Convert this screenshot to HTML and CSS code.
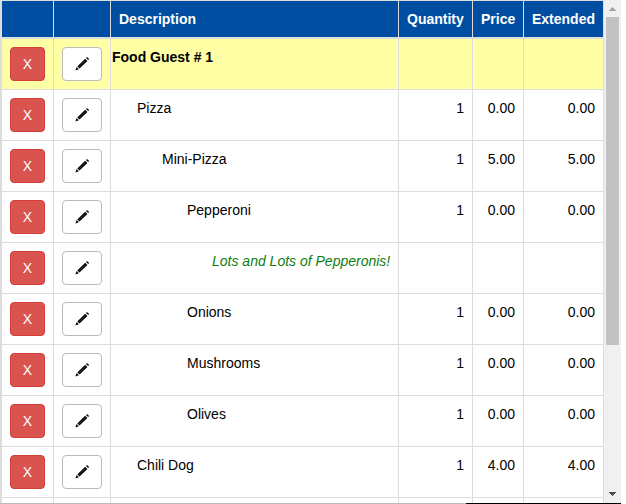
FILE: index.html
```html
<!DOCTYPE html>
<html lang="en">
<head>
    <meta charset="UTF-8">
    <meta name="viewport" content="width=device-width, initial-scale=1.0">
    <title>Order Items</title>
    <link rel="stylesheet" href="styles.css">
</head>
<body>

<div class="order-panel">
    <div class="order-view">
        <div class="order-list">
            <table id="orderTable">
                <colgroup>
                    <col class="col-delete">
                    <col class="col-edit">
                    <col>
                    <col class="col-quantity">
                    <col class="col-price">
                    <col class="col-extended">
                </colgroup>
                <thead>
                    <tr>
                        <th></th>
                        <th></th>
                        <th>Description</th>
                        <th>Quantity</th>
                        <th>Price</th>
                        <th>Extended</th>
                    </tr>
                </thead>
                <tbody>
                    <!-- Order rows will appear here -->
                </tbody>
                <tfoot>
                    <tr><td></td><td></td><td></td><td></td><td></td><td></td></tr>
                </tfoot>
            </table>
        </div>
        <div class="scrollbar">
            <svg class="arrow-up" width="7" height="4" viewBox="0 0 7 4"><path d="M3 0h1v1h1v1h1v1h1v1H0V3h1V2h1V1h1z"/></svg>
            <div class="track"><div class="thumb"></div></div>
            <svg class="arrow-down" width="7" height="4" viewBox="0 0 7 4"><path d="M0 0h7v1H6v1H5v1H4v1H3V3H2V2H1V1H0z"/></svg>
        </div>
    </div>
    <div class="bottom-line"></div>
</div>

<script>
    const items = [
        { name: 'Food Guest # 1', level: 0, type: 'guest' },
        { name: 'Pizza', level: 1, quantity: 1, price: 0 },
        { name: 'Mini-Pizza', level: 2, quantity: 1, price: 5 },
        { name: 'Pepperoni', level: 3, quantity: 1, price: 0 },
        { name: 'Lots and Lots of Pepperonis!', level: 4, type: 'note' },
        { name: 'Onions', level: 3, quantity: 1, price: 0 },
        { name: 'Mushrooms', level: 3, quantity: 1, price: 0 },
        { name: 'Olives', level: 3, quantity: 1, price: 0 },
        { name: 'Chili Dog', level: 1, quantity: 1, price: 4 }
    ];

    const pencil = `
        <svg width="14" height="14" viewBox="0 0 14 14">
            <path d="M11 .9l.5-.5q.5-.4 1 0l1.2 1.2q.4.5 0 1l-.5.5z"/>
            <path d="M10.2 1.7l2.2 2.2-7.9 7.7-2.2-2.2z"/>
            <path d="M1.7 10.1l2.1 2.1L.4 13.5z"/>
            <path class="shine" d="M4 10l6.6-6.5"/>
        </svg>`;

    function displayItems() {
        const tbody = document.getElementById('orderTable').querySelector('tbody');

        items.forEach(item => {
            const row = document.createElement('tr');
            const hasPrice = item.quantity !== undefined;
            row.className = item.type || 'item';
            row.innerHTML = `
                <td><button class="btn btn-delete" aria-label="Delete ${item.name}">X</button></td>
                <td><button class="btn btn-edit" aria-label="Edit ${item.name}">${pencil}</button></td>
                <td class="description level-${item.level}">${item.name}</td>
                <td class="number">${hasPrice ? item.quantity : ''}</td>
                <td class="number">${hasPrice ? item.price.toFixed(2) : ''}</td>
                <td class="number">${hasPrice ? (item.quantity * item.price).toFixed(2) : ''}</td>
            `;
            tbody.appendChild(row);
        });
    }

    displayItems();
</script>

</body>
</html>
```
FILE: styles.css
```css
* {
    box-sizing: border-box;
}
body {
    margin: 0;
    overflow: hidden;
    background-color: white;
    color: #000;
    font-family: "Liberation Sans", Arial, sans-serif;
    font-size: 14px;
    line-height: 20px;
}
.order-panel {
    display: flex;
    flex-direction: column;
    height: 100vh;
    margin-right: 5px;
}
.order-view {
    display: flex;
    flex: 1;
    min-height: 0;
}
.order-list {
    flex: 1;
    overflow: hidden;
    border-top: 1px solid #ddd;
    border-left: 2px solid #ddd;
}
table {
    width: 100%;
    table-layout: fixed;
    border-collapse: separate;
    border-spacing: 0;
}
.col-delete {
    width: 52px;
}
.col-edit {
    width: 57px;
}
.col-quantity {
    width: 74px;
}
.col-price {
    width: 51px;
}
.col-extended {
    width: 80px;
}
th, td {
    padding: 8px;
    border-right: 1px solid #ddd;
    border-bottom: 1px solid #ddd;
    text-align: left;
    vertical-align: top;
}
th {
    height: 38px;
    border-bottom-width: 2px;
    background-color: #004ea1;
    color: white;
}
.number {
    text-align: right;
}
.guest td {
    background-color: #ffffa6;
    font-weight: bold;
}
.note .description {
    color: #107c10;
    font-style: italic;
}
.description {
    padding-right: 0;
    white-space: nowrap;
}
.level-0 {
    padding-left: 1px;
}
.level-1 {
    padding-left: 26px;
}
.level-2 {
    padding-left: 51px;
}
.level-3 {
    padding-left: 76px;
}
.level-4 {
    padding-left: 101px;
}
.btn {
    display: flex;
    align-items: center;
    justify-content: center;
    width: 100%;
    height: 34px;
    padding: 0;
    border: 1px solid #bbb;
    border-radius: 4px;
    background-color: white;
    font-family: inherit;
    font-size: 14px;
    cursor: pointer;
}
.btn-delete {
    border-color: #d43f3a;
    background-color: #d9534f;
    color: white;
}
.btn-edit svg {
    fill: #000;
}
.btn-edit .shine {
    fill: none;
    stroke: #666;
    stroke-width: 0.5;
}
.scrollbar {
    display: flex;
    flex-direction: column;
    align-items: center;
    width: 17px;
    padding: 7px 2px;
    background-color: #f0f0f0;
}
.arrow-up {
    fill: #b0a0a0;
}
.arrow-down {
    fill: #505050;
}
.track {
    flex: 1;
    width: 100%;
    margin: 6px 0;
}
.thumb {
    height: 70%;
    background-color: #c2c2c2;
}
.bottom-line {
    height: 1px;
    background: linear-gradient(to right, #bbb 75%, #000 75%);
}
```
